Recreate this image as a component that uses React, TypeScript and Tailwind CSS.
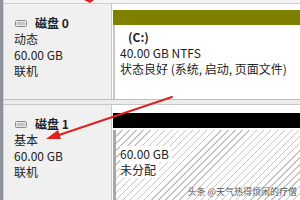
import React from "react";

const font = { fontFamily: '"Noto Sans CJK SC", "Noto Sans", sans-serif' };

function DiskIcon() {
  return (
    <svg width="12" height="7" viewBox="0 0 12 7" className="shrink-0">
      <rect x="0.5" y="0.5" width="11" height="6" rx="1" fill="#e6e6e6" stroke="#8a8a8a" />
      <rect x="2" y="2" width="8" height="3" fill="#c4c4c4" />
    </svg>
  );
}

export default function App() {
  return (
    <div
      className="relative w-[300px] h-[200px] overflow-hidden bg-[#f0f0f0] flex text-[12px] leading-[16px] text-[#222]"
      style={font}
    >
      <div className="w-[3px] bg-[#8e949c] shrink-0" />
      <div className="flex-1 flex flex-col border-l border-[#cfcfcf]">
        <div className="h-[4px] bg-[#f4f4f4] border-b border-[#cfcfcf] shrink-0" />
        {/* Disk 0 */}
        <div className="h-[96px] flex shrink-0 border-b border-[#bdbdbd]">
          <div className="w-[108px] bg-[#f0f0f0] border-r border-[#c8c8c8] pl-[10px] pt-[11px] flex flex-col">
            <div className="flex items-center gap-[8px] ml-[1px] h-[16px]">
              <DiskIcon />
              <span className="font-bold">磁盘 0</span>
            </div>
            <div>动态</div>
            <div>60.00 GB</div>
            <div>联机</div>
          </div>
          <div className="flex-1 bg-white pt-[6px] flex flex-col">
            <div className="h-[15px] bg-[#808000] ml-[1px]" />
            <div className="flex-1 border-l-[2px] border-[#c8c8c8] ml-[1px] bg-white pl-[5px] pt-[4px] flex flex-col">
              <div className="font-bold pl-[8px]">(C:)</div>
              <div>40.00 GB NTFS</div>
              <div className="whitespace-nowrap">状态良好 (系统, 启动, 页面文件)</div>
            </div>
          </div>
        </div>
        <div className="h-[5px] bg-[#ececec] border-b border-[#c8c8c8] shrink-0" />
        {/* Disk 1 */}
        <div className="flex-1 flex">
          <div className="w-[108px] bg-[#f0f0f0] border-r border-[#c8c8c8] pl-[10px] pt-[11px] flex flex-col">
            <div className="flex items-center gap-[8px] ml-[1px] h-[16px]">
              <DiskIcon />
              <span className="font-bold">磁盘 1</span>
            </div>
            <div>基本</div>
            <div>60.00 GB</div>
            <div>联机</div>
          </div>
          <div className="flex-1 bg-white pt-[8px] flex flex-col">
            <div className="h-[15px] bg-black ml-[1px]" />
            <div className="flex-1 border-l-[3px] border-[#a8a8a8] ml-[1px] mt-[2px] bg-[repeating-linear-gradient(135deg,#ffffff_0px,#ffffff_4px,#c4c4c4_4px,#c4c4c4_5px)] pl-[4px] pt-[16px] flex flex-col items-start">
              <div className="bg-white pr-[3px]">60.00 GB</div>
              <div className="bg-white pr-[3px]">未分配</div>
            </div>
          </div>
        </div>
      </div>
      <div className="absolute right-[3px] bottom-[3px] text-[9px] leading-[10px] text-[#555] [text-shadow:0_0_2px_#fff]">
        头条 @天气热得烦闹的疗僧
      </div>
      <svg className="absolute left-0 top-0 pointer-events-none" width="300" height="200">
        <path d="M84 0 L94 0 L90 3 Z" fill="#e02020" />
        <line x1="172" y1="97" x2="56" y2="136" stroke="#e02020" strokeWidth="2" strokeLinecap="round" />
        <polygon points="46,139 58,130 61,139" fill="#e02020" />
      </svg>
    </div>
  );
}
